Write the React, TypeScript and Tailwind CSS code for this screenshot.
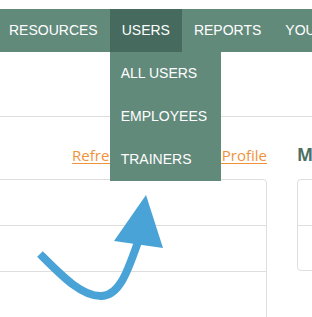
import { useState } from "react";

const NAV_ITEMS = ["RESOURCES", "USERS", "REPORTS", "YOUR ACCOUNT"];
const USER_MENU = ["ALL USERS", "EMPLOYEES", "TRAINERS"];

function Arrow() {
  // annotation arrow pointing at the dropdown
  return (
    <svg
      className="pointer-events-none absolute left-0 top-0"
      width="312"
      height="317"
      viewBox="0 0 312 317"
    >
      <path
        d="M40 254 C62 276, 82 297, 102 296 C120 295, 128 270, 138 242"
        fill="none"
        stroke="#4aa3d6"
        strokeWidth="8"
      />
      <polygon points="146,195 114,241 163,248" fill="#4aa3d6" />
    </svg>
  );
}

export default function App() {
  const [open] = useState("USERS");

  return (
    <div className="relative h-[317px] w-[312px] overflow-hidden bg-white">
      {/* Top navigation */}
      <nav className="mt-[9px] flex h-[43px] items-stretch bg-[#628a7b] font-['Liberation_Sans',Arial,sans-serif] text-[14px] text-white">
        <div className="-ml-[3px] flex items-stretch whitespace-nowrap">
          {NAV_ITEMS.map(item => (
            <div
              key={item}
              className={
                item === open
                  ? "relative z-10 flex items-center bg-[#466b5e] px-3"
                  : "relative flex items-center px-3"
              }
            >
              {item}
              {item === open ? (
                <ul className="absolute left-0 top-full w-[111px] bg-[#628a7b]">
                  {USER_MENU.map(sub => (
                    <li key={sub} className="flex h-[43px] items-center px-[11px]">
                      {sub}
                    </li>
                  ))}
                </ul>
              ) : null}
            </div>
          ))}
        </div>
      </nav>

      {/* Page content */}
      <div className="mt-[64px] border-t border-[#dedede] pt-[28px] font-['Open_Sans',sans-serif]">
        <div className="flex gap-[30px]">
          <div className="-ml-[10px] w-[277px] shrink-0">
            <div className="flex h-[20px] items-center justify-end gap-[18px] text-[15px] leading-[20px] text-[#f0923a]">
              <a href="#" className="underline underline-offset-2">Refresh Status</a>
              <a href="#" className="underline underline-offset-2">Edit Profile</a>
            </div>
            <div className="mt-[14px] rounded-tr-[4px] border border-[#dedede]">
              <div className="h-[45px]" />
              <div className="h-[46px] border-t border-[#dedede]" />
              <div className="h-[60px] border-t border-[#dedede]" />
            </div>
          </div>
          <div className="w-[200px] shrink-0">
            <h2 className="h-[20px] text-[17px] font-bold leading-[20px] text-[#4e7063]">My Courses</h2>
            <div className="mt-[14px] rounded-[4px] border border-[#dedede]">
              <div className="h-[45px]" />
              <div className="h-[45px] border-t border-[#dedede]" />
            </div>
          </div>
        </div>
      </div>

      <Arrow />
    </div>
  );
}
